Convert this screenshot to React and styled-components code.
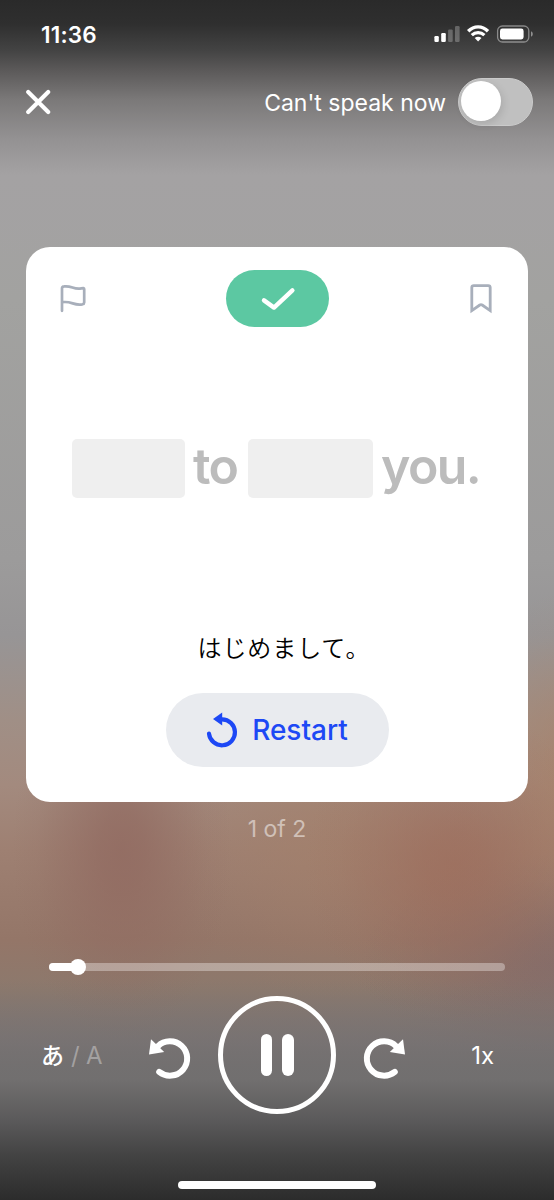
import React, { useState } from 'react';
import styled, { createGlobalStyle } from 'styled-components';

const PROGRESS = 6.25;

export default function App() {
  const [muted, setMuted] = useState(false);

  return (
    <>
      <GlobalStyle />
      <Screen>
        <StatusBar>
          <Time>11:36</Time>
          <StatusIcons />
        </StatusBar>

        <Header>
          <IconButton aria-label="Close">
            <CloseIcon />
          </IconButton>
          <SpeakToggle>
            <ToggleLabel>Can't speak now</ToggleLabel>
            <Track
              role="switch"
              aria-checked={muted}
              $on={muted}
              onClick={() => setMuted(!muted)}
            >
              <Knob />
            </Track>
          </SpeakToggle>
        </Header>

        <Card>
          <CardTop>
            <IconButton aria-label="Report">
              <FlagIcon />
            </IconButton>
            <CheckPill>
              <CheckIcon />
            </CheckPill>
            <IconButton aria-label="Bookmark">
              <BookmarkIcon />
            </IconButton>
          </CardTop>

          <Sentence>
            <Blank $width={113} />
            <Word $width={63}>to</Word>
            <Blank $width={125} />
            <Word $width={112}>you.</Word>
          </Sentence>

          <Translation>はじめまして。</Translation>

          <RestartButton>
            <RestartIcon />
            <span>Restart</span>
          </RestartButton>
        </Card>

        <Counter>1 of 2</Counter>

        <Slider>
          <SliderFill style={{ width: `${PROGRESS}%` }} />
          <SliderThumb />
        </Slider>

        <Controls>
          <Language>
            <Kana>あ</Kana>
            <Dim>/</Dim>
            <Dim>A</Dim>
          </Language>
          <IconButton aria-label="Back">
            <SeekIcon />
          </IconButton>
          <PauseButton aria-label="Pause">
            <PauseBar />
            <PauseBar />
          </PauseButton>
          <IconButton aria-label="Forward">
            <SeekIcon forward />
          </IconButton>
          <Speed>1x</Speed>
        </Controls>

        <HomeIndicator />
      </Screen>
    </>
  );
}

function StatusIcons() {
  return (
    <svg width="100" height="20" viewBox="0 0 100 20" fill="#fff">
      <rect x="0.4" y="12" width="4.4" height="6" rx="1.2" />
      <rect x="7.2" y="9" width="4.6" height="9" rx="1.2" />
      <g opacity="0.25">
        <rect x="14.1" y="5.4" width="4.6" height="12.6" rx="1.2" />
        <rect x="21" y="2" width="4.6" height="16" rx="1.2" />
      </g>
      <path
        d="M34.2 7.2C40 1.4 48.2 1.4 54 7.2"
        fill="none"
        stroke="#fff"
        strokeWidth="3.4"
      />
      <path
        d="M37.8 11.2C41.4 7.7 46.8 7.7 50.4 11.2"
        fill="none"
        stroke="#fff"
        strokeWidth="3.2"
      />
      <path d="M40.7 14C42.7 12.3 45.5 12.3 47.5 14L44.1 17.6Z" />
      <rect
        x="63.6"
        y="2"
        width="31.2"
        height="16"
        rx="4.8"
        fill="none"
        stroke="#fff"
        strokeOpacity="0.42"
        strokeWidth="1.3"
      />
      <rect x="66" y="4.6" width="23.6" height="10.8" rx="2.4" />
      <path d="M97 7.2Q98.8 8 98.8 10T97 12.8Z" opacity="0.45" />
    </svg>
  );
}

function CloseIcon() {
  return (
    <svg width="26" height="26" viewBox="0 0 26 26">
      <path
        d="M3.2 3L23.2 23M23.2 3L3.2 23"
        stroke="#fff"
        strokeWidth="4.1"
        strokeLinecap="round"
      />
    </svg>
  );
}

function FlagIcon() {
  return (
    <svg width="28" height="30" viewBox="0 0 28 30">
      <path
        d="M3 26.8V4.2C3 3 4 2.5 5.2 2.4C13 1.5 14.6 6 22.4 4.4C24 4.1 25.2 4 25.2 5V18.4C25.2 19.6 24.6 20 23.4 20.3C14.6 22 13 16.8 3.2 18.2"
        fill="none"
        stroke="#a8afbb"
        strokeWidth="2.7"
        strokeLinecap="round"
        strokeLinejoin="round"
      />
    </svg>
  );
}

function BookmarkIcon() {
  return (
    <svg width="24" height="32" viewBox="0 0 24 32">
      <path
        d="M2.8 27.6V4.6Q2.8 2.6 4.8 2.6H19.2Q21.2 2.6 21.2 4.6V27.6L13.2 22Q12 21.2 10.8 22Z"
        fill="none"
        stroke="#a8afbb"
        strokeWidth="2.8"
      />
    </svg>
  );
}

function CheckIcon() {
  return (
    <svg width="36" height="24" viewBox="0 0 36 24">
      <path
        d="M4 13.4L14 20.6L32.4 3.4"
        fill="none"
        stroke="#fff"
        strokeWidth="4.4"
        strokeLinecap="round"
        strokeLinejoin="round"
      />
    </svg>
  );
}

function RestartIcon() {
  return (
    <svg width="32" height="36" viewBox="0 0 32 36">
      <path
        d="M3 21.6A13 13 0 1 0 16 7.3"
        fill="none"
        stroke="#1d48f5"
        strokeWidth="4.2"
        strokeLinecap="round"
      />
      <path d="M7 7L16.2 0.6V13.4Z" fill="#1d48f5" />
    </svg>
  );
}

function SeekIcon({ forward }) {
  return (
    <svg width="44" height="44" viewBox="0 0 44 44">
      <g transform={forward ? 'translate(44 0) scale(-1 1)' : undefined}>
        <path
          d="M11.2 35.9A17.2 17.2 0 1 0 9.8 10.3"
          fill="none"
          stroke="#fff"
          strokeWidth="6"
          strokeLinecap="round"
        />
        <path d="M3 3.2L1 18.4L16.2 16.1Z" fill="#fff" />
      </g>
    </svg>
  );
}

const GlobalStyle = createGlobalStyle`
  * {
    box-sizing: border-box;
  }

  body {
    margin: 0;
    font-family: Inter, 'Noto Sans CJK JP', sans-serif;
  }

  button {
    font-family: inherit;
    border: none;
    padding: 0;
    cursor: pointer;
  }

  svg {
    display: block;
    flex-shrink: 0;
  }
`;

// soft colour spot with a smooth falloff, so no edge shows
const spot = (size, at, rgb, alpha) => `radial-gradient(
  ellipse ${size} at ${at},
  rgba(${rgb}, ${alpha}) 0%,
  rgba(${rgb}, ${alpha * 0.88}) 20%,
  rgba(${rgb}, ${alpha * 0.5}) 50%,
  rgba(${rgb}, ${alpha * 0.14}) 78%,
  rgba(${rgb}, 0) 100%
)`;

const Screen = styled.main`
  display: flex;
  flex-direction: column;
  align-items: center;
  width: 554px;
  height: 1200px;
  overflow: hidden;
  color: #fff;
  background:
    linear-gradient(
      180deg,
      #2a2a2a 0,
      #2f2f2f 24px,
      #434343 50px,
      #5b5959 70px,
      #7b7979 100px,
      #939192 138px,
      rgba(164, 162, 163, 1) 175px,
      rgba(164, 162, 163, 0) 260px
    ),
    linear-gradient(
      180deg,
      rgba(113, 111, 111, 0) 980px,
      rgba(113, 111, 111, 0.95) 1080px,
      #5b5a5b 1120px,
      #424242 1157px,
      #2c2c2c 1200px
    ),
    ${spot('110px 190px', '122px 850px', '144, 104, 95', 0.75)},
    ${spot('150px 160px', '455px 865px', '158, 108, 90', 0.7)},
    ${spot('190px 110px', '550px 965px', '130, 106, 105', 0.75)},
    ${spot('160px 160px', '330px 840px', '164, 128, 106', 0.6)},
    ${spot('130px 190px', '574px 780px', '168, 128, 102', 0.65)},
    linear-gradient(
      180deg,
      #a4a2a3 175px,
      #a2a2a0 300px,
      #9c9b9b 560px,
      #979596 635px,
      #a08f86 720px,
      #a38a7e 785px,
      #9e8072 850px,
      #947668 940px,
      #8c796d 990px,
      #807777 1045px,
      #716f6f 1090px
    );
`;

const StatusBar = styled.div`
  display: flex;
  align-items: center;
  justify-content: space-between;
  width: 100%;
  height: 68px;
  padding: 0 20px 0 41px;
`;

const Time = styled.span`
  font-size: 22.5px;
  font-weight: 600;
  letter-spacing: 0.2px;
`;

const Header = styled.header`
  display: flex;
  align-items: center;
  justify-content: space-between;
  width: 100%;
  height: 68px;
  padding: 0 21px 0 25px;
`;

const IconButton = styled.button`
  background: none;
`;

const SpeakToggle = styled.div`
  display: flex;
  align-items: center;
`;

const ToggleLabel = styled.span`
  margin-right: 12px;
  padding-top: 1px;
  font-size: 23px;
`;

const Track = styled.button`
  display: flex;
  align-items: center;
  justify-content: ${({ $on }) => ($on ? 'flex-end' : 'flex-start')};
  width: 75px;
  height: 48px;
  padding: 0 1.5px;
  border: 1.5px solid #cbcbcb;
  border-radius: 24px;
  background: ${({ $on }) => ($on ? '#5cc8a2' : '#c0c0c0')};
`;

const Knob = styled.span`
  width: 40px;
  height: 40px;
  margin-top: -2px;
  border-radius: 50%;
  background: #fff;
  box-shadow: 2px 3px 8px rgba(0, 0, 0, 0.12);
`;

const Card = styled.section`
  display: flex;
  flex-direction: column;
  align-items: center;
  width: 502px;
  height: 555px;
  margin-top: 111px;
  padding-top: 23px;
  flex-shrink: 0;
  border-radius: 24px;
  background: #fff;
`;

const CardTop = styled.div`
  display: flex;
  align-items: center;
  justify-content: space-between;
  width: 100%;
  padding: 0 35px 0 32.5px;
`;

const CheckPill = styled.div`
  display: flex;
  align-items: center;
  justify-content: center;
  width: 103px;
  height: 57px;
  border-radius: 29px;
  background: #5cc8a2;
`;

const Sentence = styled.div`
  display: flex;
  align-items: center;
  height: 59px;
  margin-top: 112px;
  padding-left: 3px;
`;

const Blank = styled.span`
  width: ${({ $width }) => $width}px;
  height: 59px;
  border-radius: 5px;
  background: #efefef;
`;

const Word = styled.span`
  width: ${({ $width }) => $width}px;
  padding: 0 0 4px 8px;
  color: #bcbcbc;
  font-size: 50px;
  font-weight: 570;
  line-height: 55px;
  letter-spacing: -1.6px;
`;

const Translation = styled.p`
  margin: 131px 0 0;
  padding-left: 14px;
  color: #000;
  font-family: 'Noto Sans CJK JP', sans-serif;
  font-size: 24px;
  font-weight: 350;
  line-height: 36px;
  letter-spacing: 0.9px;
`;

const RestartButton = styled.button`
  display: flex;
  align-items: center;
  justify-content: center;
  gap: 14px;
  width: 223px;
  height: 74px;
  margin-top: 28px;
  border-radius: 37px;
  background: #e9ebef;
  color: #1d48f5;
  font-size: 28px;
  font-weight: 500;
`;

const Counter = styled.p`
  margin: 13px 0 0;
  color: rgba(255, 255, 255, 0.5);
  font-size: 23px;
  line-height: 28px;
`;

const Slider = styled.div`
  display: flex;
  align-items: center;
  width: 456px;
  height: 8px;
  margin-top: 120px;
  flex-shrink: 0;
  border-radius: 4px;
  background: rgba(255, 255, 255, 0.34);
`;

const SliderFill = styled.div`
  height: 8px;
  border-radius: 4px;
  background: #fff;
`;

const SliderThumb = styled.div`
  width: 16px;
  height: 16px;
  margin-left: -8px;
  flex-shrink: 0;
  border-radius: 50%;
  background: #fff;
`;

const Controls = styled.div`
  display: grid;
  grid-template-columns: 107px 44px 170px 44px 107px;
  align-items: center;
  justify-items: center;
  width: 472px;
  height: 118px;
  margin-top: 25px;
  flex-shrink: 0;

  ${IconButton} {
    padding-top: 5px;
  }
`;

const Language = styled.div`
  display: flex;
  align-items: center;
  justify-self: start;
  font-size: 24px;
  line-height: 30px;
`;

const Kana = styled.span`
  width: 30px;
  padding-bottom: 2px;
  font-family: 'Noto Sans CJK JP', sans-serif;
  font-size: 23px;
  font-weight: 500;
`;

const Dim = styled.span`
  width: 15px;
  padding-top: 2px;
  color: rgba(255, 255, 255, 0.35);
`;

const PauseButton = styled.button`
  display: flex;
  align-items: center;
  justify-content: center;
  gap: 10px;
  width: 118px;
  height: 118px;
  border: 5px solid #fff;
  border-radius: 50%;
  background: none;
`;

const PauseBar = styled.span`
  width: 11.5px;
  height: 42px;
  border-radius: 6px;
  background: #fff;
`;

const Speed = styled.span`
  justify-self: end;
  padding: 1px 19px 0 0;
  font-size: 24px;
`;

const HomeIndicator = styled.div`
  width: 198px;
  height: 8px;
  margin-top: 66.5px;
  flex-shrink: 0;
  border-radius: 4px;
  background: #fff;
`;
